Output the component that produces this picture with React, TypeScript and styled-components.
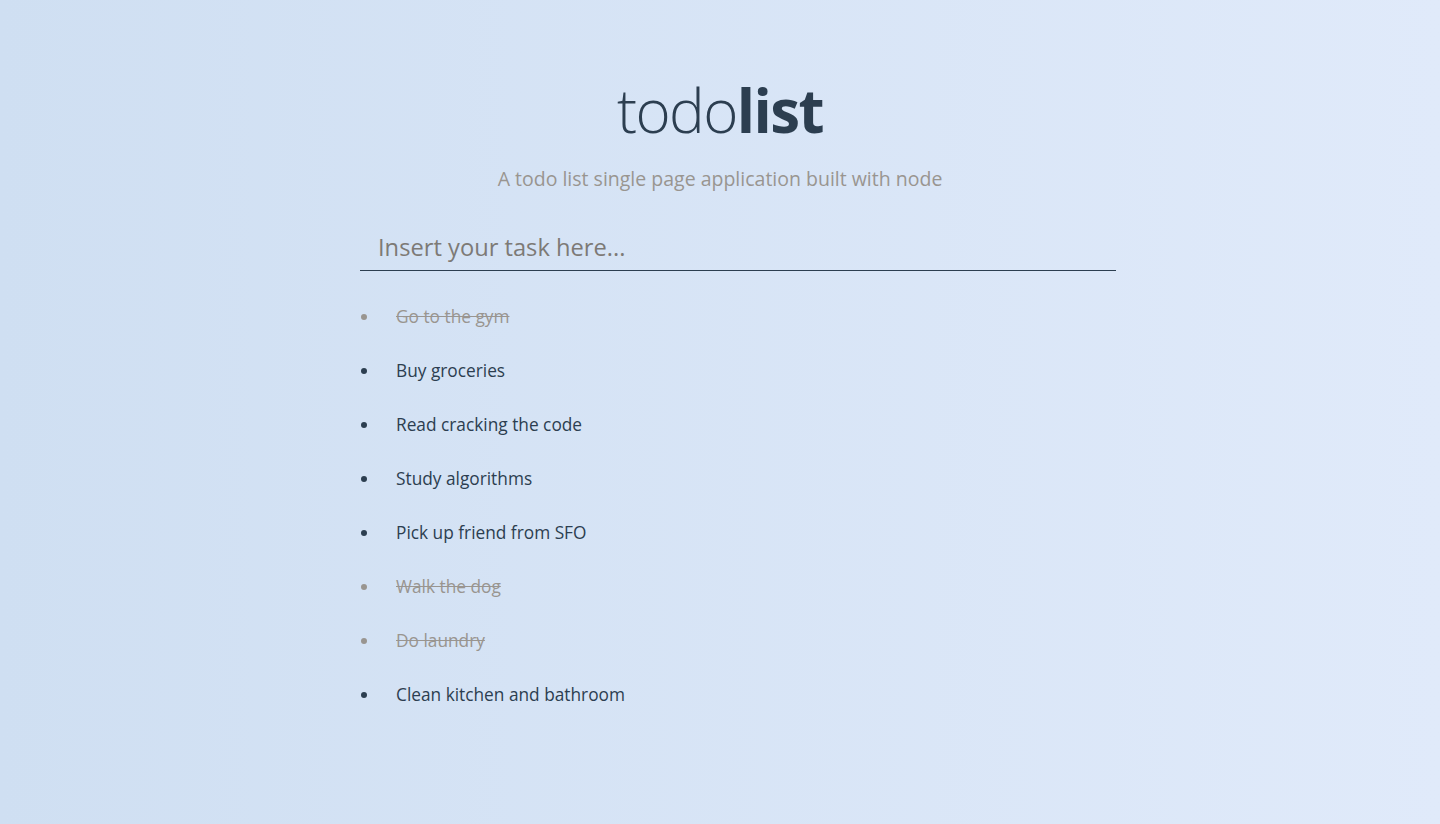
import React from "react";
import styled, { createGlobalStyle } from "styled-components";

const GlobalStyle = createGlobalStyle`
  html, body {
    margin: 0;
    padding: 0;
    min-height: 100%;
  }
  body {
    font-family: "Open Sans", "Noto Sans", sans-serif;
    background: linear-gradient(90deg, #cfdff2 0%, #e0eafa 100%);
    min-height: 824px;
  }
`;

const Page = styled.main`
  width: 720px;
  margin: 0 auto;
  padding-top: 78px;
  display: flex;
  flex-direction: column;
  align-items: stretch;
`;

const Title = styled.h1`
  margin: 0;
  text-align: center;
  font-size: 60px;
  font-weight: 300;
  line-height: 64px;
  color: #2c3e50;
  letter-spacing: -1.6px;
`;

const Bold = styled.span`
  font-weight: 700;
`;

const Subtitle = styled.p`
  margin: 24px 0 0;
  text-align: center;
  font-size: 19.5px;
  line-height: 26px;
  color: #999590;
`;

const TaskInput = styled.input`
  box-sizing: content-box;
  width: 100%;
  margin-top: 29px;
  padding: 9px 18px 6px;
  border: none;
  border-bottom: 1px solid #2c3e50;
  background: transparent;
  font-family: inherit;
  font-size: 23.7px;
  line-height: 34px;
  color: #2c3e50;
  outline: none;

  &::placeholder {
    color: #7d7a76;
  }
`;

const List = styled.ul`
  margin: 18px 0 0;
  padding: 0;
  list-style: none;
`;

const Item = styled.li<{ $done?: boolean }>`
  display: flex;
  align-items: center;
  height: 54px;
  font-size: 17.3px;
  color: ${(p) => (p.$done ? "#999590" : "#2c3e50")};
  cursor: pointer;
`;

const Bullet = styled.span`
  flex: none;
  width: 6px;
  height: 6px;
  margin: 1px 29px 0 1px;
  border-radius: 50%;
  background: currentColor;
`;

const Label = styled.span<{ $done?: boolean }>`
  text-decoration: ${(p) => (p.$done ? "line-through" : "none")};
`;

const tasks = [
  { text: "Go to the gym", done: true },
  { text: "Buy groceries", done: false },
  { text: "Read cracking the code", done: false },
  { text: "Study algorithms", done: false },
  { text: "Pick up friend from SFO", done: false },
  { text: "Walk the dog", done: true },
  { text: "Do laundry", done: true },
  { text: "Clean kitchen and bathroom", done: false },
];

export default function App() {
  return (
    <>
      <GlobalStyle />
      <Page>
        <Title>
          todo<Bold>list</Bold>
        </Title>
        <Subtitle>A todo list single page application built with node</Subtitle>
        <TaskInput placeholder="Insert your task here..." />
        <List>
          {tasks.map((t) => (
            <Item key={t.text} $done={t.done}>
              <Bullet />
              <Label $done={t.done}>{t.text}</Label>
            </Item>
          ))}
        </List>
      </Page>
    </>
  );
}
